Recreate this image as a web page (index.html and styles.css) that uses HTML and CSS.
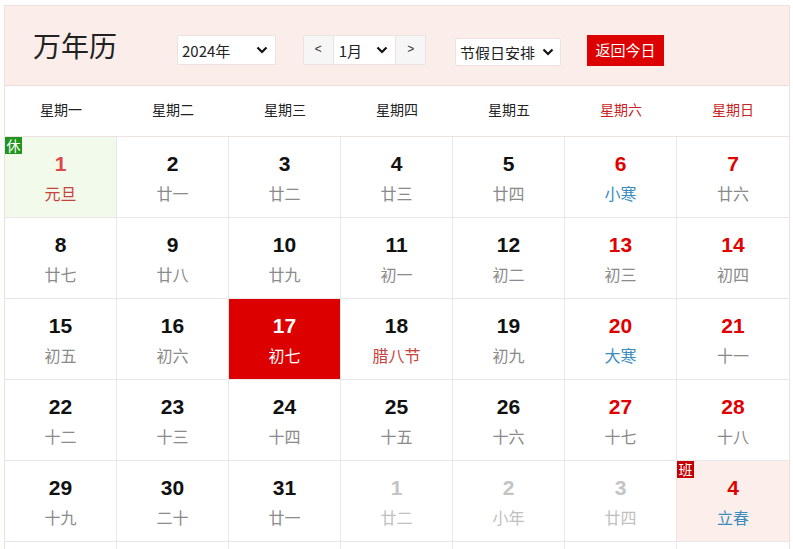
FILE: index.html
```html
<!DOCTYPE html>
<html lang="zh">
<head>
<meta charset="utf-8">
<link rel="stylesheet" href="styles.css">
</head>
<body>
<div class="cal">
  <div class="head">
    <div class="title">万年历</div>
    <div class="sel year"><span>2024年</span><svg viewBox="0 0 12 8" class="chev"><path d="M1.5 1.5 L6 6 L10.5 1.5" /></svg></div>
    <div class="mgroup">
      <div class="arrow">&lt;</div>
      <div class="msel"><span>1月</span><svg viewBox="0 0 12 8" class="chev"><path d="M1.5 1.5 L6 6 L10.5 1.5" /></svg></div>
      <div class="arrow">&gt;</div>
    </div>
    <div class="sel hol"><span>节假日安排</span><svg viewBox="0 0 12 8" class="chev"><path d="M1.5 1.5 L6 6 L10.5 1.5" /></svg></div>
    <div class="today-btn">返回今日</div>
  </div>
  <div class="week">
    <div>星期一</div><div>星期二</div><div>星期三</div><div>星期四</div><div>星期五</div><div class="we">星期六</div><div class="we">星期日</div>
  </div>
  <div class="grid">
    <div class="cell rest"><span class="badge xiu">休</span><b class="red1">1</b><i class="fest">元旦</i></div>
    <div class="cell"><b>2</b><i>廿一</i></div>
    <div class="cell"><b>3</b><i>廿二</i></div>
    <div class="cell"><b>4</b><i>廿三</i></div>
    <div class="cell"><b>5</b><i>廿四</i></div>
    <div class="cell"><b class="wk">6</b><i class="term">小寒</i></div>
    <div class="cell"><b class="wk">7</b><i>廿六</i></div>

    <div class="cell"><b>8</b><i>廿七</i></div>
    <div class="cell"><b>9</b><i>廿八</i></div>
    <div class="cell"><b>10</b><i>廿九</i></div>
    <div class="cell"><b>11</b><i>初一</i></div>
    <div class="cell"><b>12</b><i>初二</i></div>
    <div class="cell"><b class="wk">13</b><i>初三</i></div>
    <div class="cell"><b class="wk">14</b><i>初四</i></div>

    <div class="cell"><b>15</b><i>初五</i></div>
    <div class="cell"><b>16</b><i>初六</i></div>
    <div class="cell now"><b>17</b><i>初七</i></div>
    <div class="cell"><b>18</b><i class="fest">腊八节</i></div>
    <div class="cell"><b>19</b><i>初九</i></div>
    <div class="cell"><b class="wk">20</b><i class="term">大寒</i></div>
    <div class="cell"><b class="wk">21</b><i>十一</i></div>

    <div class="cell"><b>22</b><i>十二</i></div>
    <div class="cell"><b>23</b><i>十三</i></div>
    <div class="cell"><b>24</b><i>十四</i></div>
    <div class="cell"><b>25</b><i>十五</i></div>
    <div class="cell"><b>26</b><i>十六</i></div>
    <div class="cell"><b class="wk">27</b><i>十七</i></div>
    <div class="cell"><b class="wk">28</b><i>十八</i></div>

    <div class="cell"><b>29</b><i>十九</i></div>
    <div class="cell"><b>30</b><i>二十</i></div>
    <div class="cell"><b>31</b><i>廿一</i></div>
    <div class="cell other"><b>1</b><i>廿二</i></div>
    <div class="cell other"><b>2</b><i>小年</i></div>
    <div class="cell other"><b>3</b><i>廿四</i></div>
    <div class="cell work"><span class="badge ban">班</span><b class="wk">4</b><i class="term">立春</i></div>

    <div class="cell"></div><div class="cell"></div><div class="cell"></div><div class="cell"></div><div class="cell"></div><div class="cell"></div><div class="cell"></div>
  </div>
</div>
</body>
</html>
```

FILE: styles.css
```css
* { box-sizing: border-box; }
html, body { margin: 0; padding: 0; background: #fff; }
body {
  font-family: "Liberation Sans", "Noto Sans CJK SC", sans-serif;
  color: #222;
  overflow: hidden;
}
.cal {
  margin: 5px 0 0 4px;
  width: 786px;
  border: 1px solid #f2dedb;
  border-bottom: none;
}
.head {
  height: 80px;
  background: #fbeeea;
  border-bottom: 1px solid #f0dcd8;
  display: flex;
  align-items: flex-start;
  padding-left: 28px;
}
.title {
  font-family: "Noto Sans CJK SC", sans-serif;
  font-size: 28px;
  line-height: 40px;
  color: #222;
  width: 144px;
  margin-top: 19px;
}
.sel {
  background: #fff;
  border: 1px solid #ebe3e1;
  border-radius: 2px;
  height: 30px;
  display: flex;
  align-items: center;
  justify-content: space-between;
  font-family: "Noto Sans CJK SC", sans-serif;
  font-size: 15px;
  color: #222;
}
.sel span { line-height: 1; }
.chev {
  width: 12px;
  height: 8px;
  fill: none;
  stroke: #111;
  stroke-width: 2.2;
  flex: none;
}
.year { width: 99px; padding: 0 7px 0 4px; margin-top: 29px; }
.mgroup {
  margin-left: 27px;
  margin-top: 29px;
  height: 30px;
  width: 123px;
  display: flex;
  border: 1px solid #ebe3e1;
  border-radius: 2px;
  background: #f7f7f7;
}
.arrow {
  width: 29px;
  display: flex;
  align-items: center;
  justify-content: center;
  font-size: 12px;
  color: #333;
  background: #f7f6f6;
  padding-bottom: 3px;
}
.msel {
  width: 64px;
  background: #fff;
  display: flex;
  align-items: center;
  justify-content: space-between;
  padding: 0 7px 0 5px;
  font-family: "Noto Sans CJK SC", sans-serif;
  font-size: 15px;
  border-left: 1px solid #ebe3e1;
  border-right: 1px solid #ebe3e1;
}
.hol { width: 106px; margin-left: 29px; padding: 0 6px 0 4px; height: 28px; margin-top: 32px; }
.hol span { white-space: nowrap; overflow: hidden; width: 78px; }
.today-btn {
  margin-left: 26px;
  margin-top: 29px;
  width: 77px;
  height: 31px;
  background: #dd0000;
  color: #fff;
  font-family: "Noto Sans CJK SC", sans-serif;
  font-size: 15px;
  display: flex;
  align-items: center;
  justify-content: center;
  padding-bottom: 2px;
}
.week {
  display: grid;
  grid-template-columns: repeat(7, 1fr);
  height: 51px;
  border-bottom: 1px solid #ede3e3;
  font-family: "Noto Sans CJK SC", sans-serif;
  font-size: 14px;
  color: #222;
}
.week div {
  display: flex;
  align-items: center;
  justify-content: center;
  padding-bottom: 4px;
}
.week .we { color: #cc1f1f; }
.grid {
  display: grid;
  grid-template-columns: repeat(7, 1fr);
  grid-auto-rows: 81px;
}
.cell {
  position: relative;
  border-right: 1px solid #e8e8e8;
  border-bottom: 1px solid #e8e8e8;
  display: flex;
  flex-direction: column;
  align-items: center;
  padding-top: 14px;
}
.cell:nth-child(7n) { border-right: none; }
.cell b {
  font-family: "Liberation Sans", sans-serif;
  font-weight: bold;
  font-size: 21px;
  line-height: 26px;
  color: #111;
}
.cell i {
  font-style: normal;
  font-family: "Noto Sans CJK SC", sans-serif;
  font-size: 16px;
  line-height: 20px;
  margin-top: 6px;
  color: #8a8a8a;
}
.cell b.wk { color: #e00000; }
.cell b.red1 { color: #e04848; }
.cell i.fest { color: #c8423c; }
.cell i.term { color: #3a8cbf; }
.cell.other b { color: #c4c4c4; }
.cell.other i { color: #c0c0c0; }
.cell.rest { background: #f1faeb; }
.cell.work { background: #fcefeb; }
.cell.now { background: #dd0000; }
.cell.now b, .cell.now i { color: #fff; }
.badge {
  position: absolute;
  left: 0;
  top: 0;
  width: 17px;
  height: 17px;
  font-family: "Noto Sans CJK SC", sans-serif;
  font-size: 14px;
  line-height: 16px;
  color: #fff;
  text-align: center;
}
.xiu { background: #1f961f; }
.ban { background: #c40000; }
```
